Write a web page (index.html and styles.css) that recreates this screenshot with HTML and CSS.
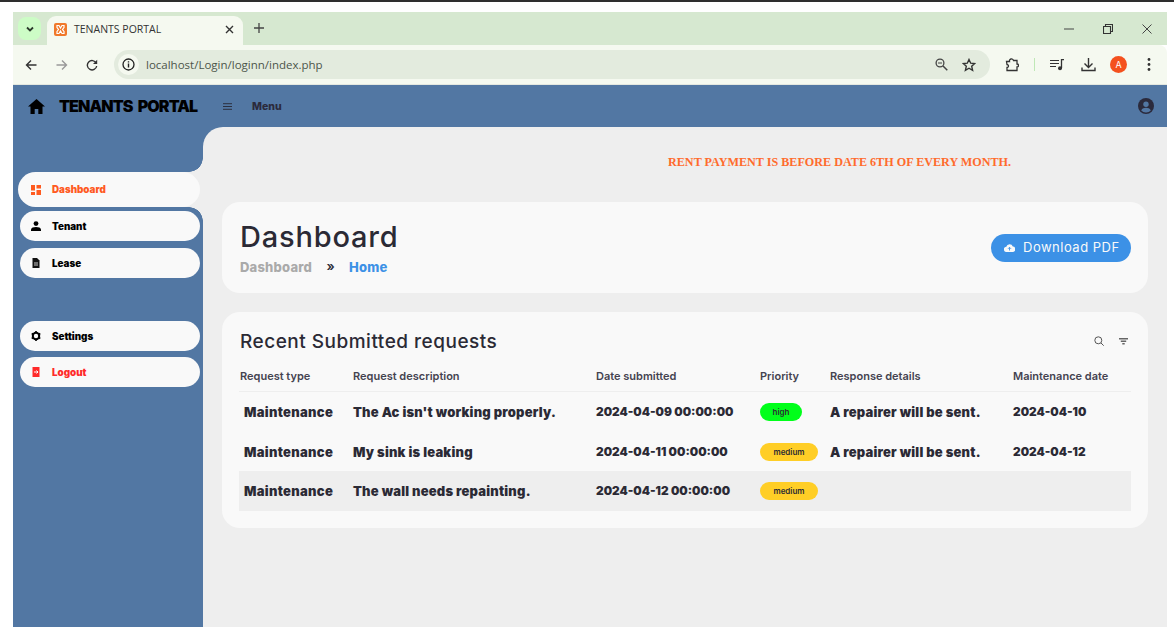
FILE: index.html
```html
<!DOCTYPE html>
<html>
<head>
  <title>TENANTS PORTAL</title>
  <link rel="stylesheet" href="styles.css">
</head>
<body>
  <div class="topline"></div>
  <div class="window">

    <!-- browser tabs -->
    <div class="tabstrip">
      <div class="tabsearch">
        <svg width="10" height="10" viewBox="0 0 10 10"><path d="M2 3.5l3 3 3-3" fill="none" stroke="#2c3a2c" stroke-width="1.8"/></svg>
      </div>
      <div class="tab">
        <svg class="favicon" width="13" height="13" viewBox="0 0 13 13">
          <rect width="13" height="13" rx="2" fill="#f0792b"/>
          <path d="M3 2.5h2l1.5 2.5L8 2.5h2v2L8.5 6.5 10 8.5v2H8L6.5 8 5 10.5H3v-2l1.5-2L3 4.5z" fill="none" stroke="#fff" stroke-width="1.2"/>
        </svg>
        <span class="tabtitle">TENANTS PORTAL</span>
        <svg width="9" height="9" viewBox="0 0 9 9"><path d="M1 1l7 7M8 1l-7 7" stroke="#333" stroke-width="1.4"/></svg>
      </div>
      <svg class="newtab" width="10" height="10" viewBox="0 0 10 10"><path d="M5 0v10M0 5h10" stroke="#444" stroke-width="1.3"/></svg>
      <div class="winbtns">
        <svg width="10" height="10" viewBox="0 0 10 10"><path d="M0 5h10" stroke="#444" stroke-width="1"/></svg>
        <svg width="10" height="10" viewBox="0 0 10 10"><path d="M.5 2.5h7v7h-7zM2.5 2.5v-2h7v7h-2" fill="none" stroke="#333" stroke-width="1.1"/></svg>
        <svg width="10" height="10" viewBox="0 0 10 10"><path d="M.5.5l9 9M9.5.5l-9 9" stroke="#444" stroke-width="1"/></svg>
      </div>
    </div>

    <!-- browser toolbar -->
    <div class="toolbar">
      <div class="navbtns">
        <svg width="12" height="12" viewBox="0 0 12 12"><path d="M11.5 6H1.5M6 1.5L1.5 6 6 10.5" fill="none" stroke="#333" stroke-width="1.4"/></svg>
        <svg width="12" height="12" viewBox="0 0 12 12"><path d="M.5 6h10M6 1.5L10.5 6 6 10.5" fill="none" stroke="#999" stroke-width="1.4"/></svg>
        <svg width="12" height="12" viewBox="0 0 12 12"><path d="M10.2 4A4.7 4.7 0 1 0 10.7 7" fill="none" stroke="#333" stroke-width="1.4"/><path d="M11.2.8V5H7z" fill="#333"/></svg>
      </div>
      <div class="omnibox">
        <span class="siteinfo">
          <svg width="13" height="13" viewBox="0 0 13 13"><circle cx="6.5" cy="6.5" r="5.5" fill="none" stroke="#222" stroke-width="1.3"/><path d="M6.5 5.6v4M6.5 3.2v1.4" stroke="#222" stroke-width="1.4"/></svg>
        </span>
        <span class="url">localhost/Login/loginn/index.php</span>
        <svg class="zoomicon" width="13" height="13" viewBox="0 0 13 13"><circle cx="5" cy="5" r="3.9" fill="none" stroke="#444" stroke-width="1.3"/><path d="M8 8l4.3 4.3" stroke="#444" stroke-width="1.5"/><path d="M3 5h4" stroke="#444" stroke-width="1"/></svg>
        <svg width="14" height="14" viewBox="0 0 14 14"><path d="M7 1.5l1.7 3.7 4 .4-3 2.7.9 4L7 10.2l-3.6 2.1.9-4-3-2.7 4-.4z" fill="none" stroke="#333" stroke-width="1.4"/></svg>
      </div>
      <div class="toolicons">
        <svg width="14" height="14" viewBox="0 0 14 14"><path d="M1.5 3.5h3a2 2 0 0 1 4-1H12V6a1.5 1.5 0 0 1 0 3v3.5H2v-3a1.5 1.5 0 0 0 0-3z" fill="none" stroke="#333" stroke-width="1.3"/></svg>
        <span class="toolsep"></span>
        <svg width="14" height="12" viewBox="0 0 14 12"><path d="M0 1.5h9M0 4.5h9M0 7.5h6" stroke="#333" stroke-width="1.2"/><path d="M11.5 9V.5H14" fill="none" stroke="#333" stroke-width="1.3"/><circle cx="10" cy="9.2" r="2" fill="#333"/></svg>
        <svg class="dlicon" width="15" height="15" viewBox="0 0 15 15"><path d="M7.5 1v9M3.500 6.500l4 4 4-4M1 10.500v3h13v-3" fill="none" stroke="#333" stroke-width="1.4"/></svg>
        <span class="avatar">A</span>
        <svg class="dotsicon" width="4" height="13" viewBox="0 0 4 13"><circle cx="2" cy="1.5" r="1.4" fill="#333"/><circle cx="2" cy="6.5" r="1.4" fill="#333"/><circle cx="2" cy="11.5" r="1.4" fill="#333"/></svg>
      </div>
    </div>

    <!-- app header -->
    <header class="appbar">
      <svg class="homeicon" width="17" height="15" viewBox="0 0 17 15"><path d="M8.5 0L0 7.5h2.5V15h4.2v-5h3.6v5h4.2V7.500H17z" fill="#000"/></svg>
      <span class="brand">TENANTS PORTAL</span>
      <svg width="9" height="7" viewBox="0 0 9 7"><path d="M0 .7h9M0 3.5h9M0 6.3h9" stroke="#2c3040" stroke-width="1"/></svg>
      <span class="menulabel">Menu</span>
      <svg class="usericon" width="16" height="16" viewBox="0 0 16 16"><circle cx="8" cy="8" r="8" fill="#2b2a3c"/><circle cx="8" cy="6.2" r="2.7" fill="#5277a3"/><path d="M3.2 12.4c1-2 3-2.600 4.800-2.600s3.800.6 4.800 2.600A6.300 6.300 0 0 1 8 14.400a6.300 6.300 0 0 1-4.800-2z" fill="#5277a3"/></svg>
    </header>

    <div class="appbody">
      <nav class="sidebar">
        <div class="navactive">
          <a class="navitem orange">
            <svg width="10" height="10" viewBox="0 0 10 10"><path d="M0 0h4v5.5H0zM5.500 0H10v3.500H5.500zM5.500 5H10v5H5.500zM0 7h4v3H0z" fill="#ff5a1f"/></svg>
            Dashboard
          </a>
        </div>
        <a class="navitem">
          <svg width="10" height="10" viewBox="0 0 10 10"><circle cx="5" cy="2.6" r="2.4" fill="#000"/><path d="M0 10V8.500C0 6.800 2.500 6 5 6s5 .8 5 2.500V10z" fill="#000"/></svg>
          Tenant
        </a>
        <a class="navitem">
          <svg width="10" height="10" viewBox="0 0 10 10"><path d="M1.500 0H6l2.500 2.500V10h-7z" fill="#111"/><path d="M3 5h4M3 7h4" stroke="#f9f9f9" stroke-width=".8"/></svg>
          Lease
        </a>
        <a class="navitem spaced">
          <svg width="10" height="10" viewBox="0 0 10 10"><circle cx="5" cy="5" r="3.2" fill="none" stroke="#000" stroke-width="2"/><path d="M5 0v1.500M5 8.500V10M.7 2.500l1.300.8M8 6.700l1.300.8M.7 7.500l1.300-.8M8 3.300l1.300-.8" stroke="#000" stroke-width="1.6"/></svg>
          Settings
        </a>
        <a class="navitem red">
          <svg width="10" height="10" viewBox="0 0 10 10"><path d="M1.500 0h7v10h-7z" fill="#ff2a2a"/><path d="M3 5h4M5.500 3.500L7 5 5.500 6.500" fill="none" stroke="#fff" stroke-width="1"/></svg>
          Logout
        </a>
      </nav>

      <main class="content">
        <p class="notice">RENT PAYMENT IS BEFORE DATE 6TH OF EVERY MONTH.</p>

        <section class="card headcard">
          <div>
            <h1>Dashboard</h1>
            <div class="crumbs">
              <span class="crumb">Dashboard</span>
              <span class="crumbsep">»</span>
              <span class="crumb current">Home</span>
            </div>
          </div>
          <a class="pdfbtn">
            <svg width="11" height="9" viewBox="0 0 11 9"><path d="M2.700 9A2.600 2.600 0 0 1 2.300 3.800 3.400 3.400 0 0 1 8.800 3.600 2.700 2.700 0 0 1 8.500 9z" fill="#f9f9f9"/><path d="M5.500 7.500v-3M4 5.800l1.500-1.500L7 5.800" fill="none" stroke="#3c91e6" stroke-width=".9"/></svg>
            Download PDF
          </a>
        </section>

        <section class="card tablecard">
          <div class="tablehead">
            <h2>Recent Submitted requests</h2>
            <svg width="10" height="10" viewBox="0 0 10 10"><circle cx="4.3" cy="4.3" r="3.5" fill="none" stroke="#555" stroke-width="1"/><path d="M7 7l2.700 2.700" stroke="#555" stroke-width="1"/></svg>
            <svg class="filtericon" width="9" height="7" viewBox="0 0 9 7"><path d="M0 .8h9M1.800 3.300h5.400M3.300 5.800h2.400" stroke="#666" stroke-width="1.5"/></svg>
          </div>
          <table>
            <colgroup>
              <col class="c1"><col class="c2"><col class="c3"><col class="c4"><col class="c5"><col class="c6">
            </colgroup>
            <thead>
              <tr>
                <th class="first">Request type</th>
                <th>Request description</th>
                <th>Date submitted</th>
                <th>Priority</th>
                <th>Response details</th>
                <th>Maintenance date</th>
              </tr>
            </thead>
            <tbody>
              <tr>
                <td class="first">Maintenance</td>
                <td>The Ac isn't working properly.</td>
                <td class="date">2024-04-09 00:00:00</td>
                <td><span class="badge high">high</span></td>
                <td>A repairer will be sent.</td>
                <td class="date">2024-04-10</td>
              </tr>
              <tr>
                <td class="first">Maintenance</td>
                <td>My sink is leaking</td>
                <td class="date">2024-04-11 00:00:00</td>
                <td><span class="badge medium">medium</span></td>
                <td>A repairer will be sent.</td>
                <td class="date">2024-04-12</td>
              </tr>
              <tr class="hover">
                <td class="first">Maintenance</td>
                <td>The wall needs repainting.</td>
                <td class="date">2024-04-12 00:00:00</td>
                <td><span class="badge medium">medium</span></td>
                <td></td>
                <td></td>
              </tr>
            </tbody>
          </table>
        </section>
      </main>
    </div>
  </div>
</body>
</html>
```

FILE: styles.css
```css
html, body {
  margin: 0;
  height: 630px;
  overflow: hidden;
  background-color: #fff;
}
body {
  font-family: "Inter", "Open Sans", sans-serif;
}
.topline {
  height: 2px;
  background-color: #2e2e2e;
}
.window {
  margin: 10px 7px 0 13px;
  height: 615px;
  display: flex;
  flex-direction: column;
}

/* browser chrome */
.tabstrip {
  height: 33px;
  flex: none;
  background-color: #d6e8d0;
  display: flex;
  align-items: flex-end;
  padding-left: 5px;
}
.tabsearch {
  width: 23px;
  height: 23px;
  margin-bottom: 5px;
  border-radius: 8px;
  background-color: #cdfcc6;
  display: flex;
  align-items: center;
  justify-content: center;
}
.tab {
  width: 196px;
  height: 29px;
  margin-left: 6px;
  box-sizing: border-box;
  padding: 0 9px 3px 7px;
  border-radius: 9px 9px 0 0;
  background-color: #f5f9f0;
  display: flex;
  align-items: center;
}
.favicon {
  margin-right: 7px;
}
.tabtitle {
  flex: 1;
  font-family: "Open Sans", sans-serif;
  font-size: 10.5px;
  color: #333;
}
.newtab {
  margin: 0 0 12px 11px;
}
.winbtns {
  margin-left: auto;
  height: 100%;
  display: flex;
  align-items: center;
  gap: 29px;
  padding-right: 15px;
}
.toolbar {
  height: 39px;
  flex: none;
  background-color: #f5f9f0;
  border-radius: 0 8px 0 0;
  border-bottom: 1px solid #e4e8e0;
  display: flex;
  align-items: center;
}
.navbtns {
  display: flex;
  align-items: center;
  gap: 18.5px;
  padding-left: 12px;
  width: 89px;
  box-sizing: border-box;
  flex: none;
}
.omnibox {
  width: 876px;
  height: 29px;
  margin-left: 12px;
  flex: none;
  border-radius: 15px;
  background-color: #e3ebde;
  display: flex;
  align-items: center;
  padding-right: 14px;
  box-sizing: border-box;
}
.siteinfo {
  width: 21px;
  height: 21px;
  margin-left: 4px;
  border-radius: 50%;
  background-color: #f5f9f0;
  display: flex;
  align-items: center;
  justify-content: center;
}
.url {
  margin-left: 7px;
  flex: 1;
  font-family: "Open Sans", sans-serif;
  font-size: 11.5px;
  color: #4c554a;
}
.zoomicon {
  margin-right: 14px;
}
.toolicons {
  display: flex;
  align-items: center;
  padding-left: 15px;
}
.toolsep {
  width: 1px;
  height: 13px;
  margin: 0 15px;
  background-color: #bfe8b6;
}
.dlicon {
  margin-left: 17px;
}
.avatar {
  width: 17px;
  height: 17px;
  margin-left: 14px;
  border-radius: 50%;
  background-color: #f4511e;
  color: #fff;
  font-size: 9px;
  line-height: 17px;
  text-align: center;
}
.dotsicon {
  margin-left: 20px;
}

/* app */
.appbar {
  height: 42px;
  flex: none;
  background-color: #5277a3;
  display: flex;
  align-items: center;
  padding-left: 15px;
}
.brand {
  margin-left: 14px;
  font-size: 16px;
  font-weight: 900;
  letter-spacing: -0.9px;
  word-spacing: 3px;
  color: #000;
  width: 164px;
  white-space: nowrap;
}
.menulabel {
  margin-left: 20px;
  font-size: 10.5px;
  font-weight: 800;
  color: #2b2a3c;
}
.usericon {
  margin-left: auto;
  margin-right: 13px;
}
.appbody {
  flex: 1;
  display: flex;
  background-color: #5277a3;
}
.sidebar {
  width: 190px;
  flex: none;
  box-sizing: border-box;
  padding: 45px 3px 0 7px;
  display: flex;
  flex-direction: column;
  gap: 7px;
}
.navitem {
  position: relative;
  z-index: 1;
  height: 30px;
  border-radius: 15px;
  background-color: #f9f9f9;
  display: flex;
  align-items: center;
  gap: 11px;
  padding-left: 11px;
  font-size: 9.8px;
  font-weight: 900;
  color: #000;
}
.navitem.spaced {
  margin-top: 36px;
}
.navitem.orange {
  color: #ff5a1f;
  height: 35px;
  border-radius: 18px;
  margin-left: -2px;
  padding-left: 13px;
  width: 182px;
  box-sizing: border-box;
}
.navitem.red {
  color: #ff2a2a;
  margin-top: -1px;
}
.navactive {
  position: relative;
  margin: 0 -3px -3px -7px;
  padding-left: 7px;
  background: linear-gradient(90deg, #5277a3 50%, #eee 50%);
}
.navactive::before,
.navactive::after {
  content: "";
  position: absolute;
  right: 0;
  width: 14px;
  height: 14px;
}
.navactive::before {
  top: -14px;
  background: radial-gradient(circle at 0 0, #5277a3 13.5px, #eee 14px);
}
.navactive::after {
  bottom: -14px;
  background: radial-gradient(circle at 0 100%, #5277a3 13.5px, #eee 14px);
}
.content {
  flex: 1;
  background-color: #eee;
  border-radius: 20px 0 0 0;
  padding: 0 19px;
  min-width: 0;
}
.notice {
  margin: 28px 0 0 446px;
  height: 47px;
  font-family: "Liberation Serif", serif;
  font-size: 12.15px;
  font-weight: bold;
  color: #ff6b2c;
}
.card {
  background-color: #f9f9f9;
  border-radius: 18px;
  box-sizing: border-box;
}
.headcard {
  height: 91px;
  padding: 0 17px 0 18px;
  display: flex;
  align-items: center;
  justify-content: space-between;
}
h1 {
  margin: -2px 0 0;
  font-size: 29px;
  line-height: 36px;
  font-weight: 500;
  letter-spacing: 0.8px;
  color: #2b2a35;
}
.crumbs {
  margin-top: 5px;
  display: flex;
  align-items: center;
  font-size: 13px;
  font-weight: 800;
  height: 15px;
}
.crumb {
  color: #aaa;
  letter-spacing: 0.2px;
}
.crumb.current {
  color: #3c91e6;
}
.crumbsep {
  width: 37px;
  text-align: center;
  color: #2b2a35;
  font-weight: 600;
  margin-top: -3px;
}
.pdfbtn {
  width: 140px;
  height: 28px;
  border-radius: 14px;
  background-color: #3c91e6;
  color: #f9f9f9;
  display: flex;
  align-items: center;
  gap: 8px;
  box-sizing: border-box;
  padding: 0 0 1px 13px;
  font-size: 13px;
  letter-spacing: 0.5px;
}
.tablecard {
  height: 216px;
  margin-top: 19px;
  padding: 0 17px;
}
.tablehead {
  height: 58px;
  display: flex;
  align-items: center;
  padding: 0 1px;
}
h2 {
  margin: 0 auto 0 0;
  font-size: 19px;
  font-weight: 500;
  letter-spacing: 0.5px;
  color: #2b2a35;
}
.filtericon {
  margin-left: 15px;
  margin-right: 2px;
}
table {
  width: 892px;
  table-layout: fixed;
  border-collapse: collapse;
}
.c1 { width: 114px; }
.c2 { width: 243px; }
.c3 { width: 164px; }
.c4 { width: 70px; }
.c5 { width: 183px; }
th {
  height: 12px;
  padding: 0 0 9px 0;
  text-align: left;
  font-size: 11px;
  line-height: 12px;
  font-weight: 600;
  color: #444350;
  border-bottom: 1px solid #eee;
  white-space: nowrap;
}
th.first {
  padding-left: 1px;
}
td {
  height: 39.7px;
  padding: 0;
  font-size: 13px;
  font-weight: 900;
  letter-spacing: 0.2px;
  color: #2b2a35;
  white-space: nowrap;
}
td.first {
  padding-left: 5px;
  letter-spacing: 0.3px;
}
td.date {
  font-size: 11.8px;
  letter-spacing: 0;
}
tr.hover td {
  background-color: #eee;
}
.badge {
  display: block;
  height: 18px;
  line-height: 18px;
  border-radius: 9px;
  text-align: center;
  font-size: 8px;
  font-weight: 600;
  letter-spacing: 0;
  color: #2b2a35;
}
.badge.high {
  width: 42px;
  background-color: #00ff1a;
}
.badge.medium {
  width: 58px;
  background-color: #ffce26;
}
```
